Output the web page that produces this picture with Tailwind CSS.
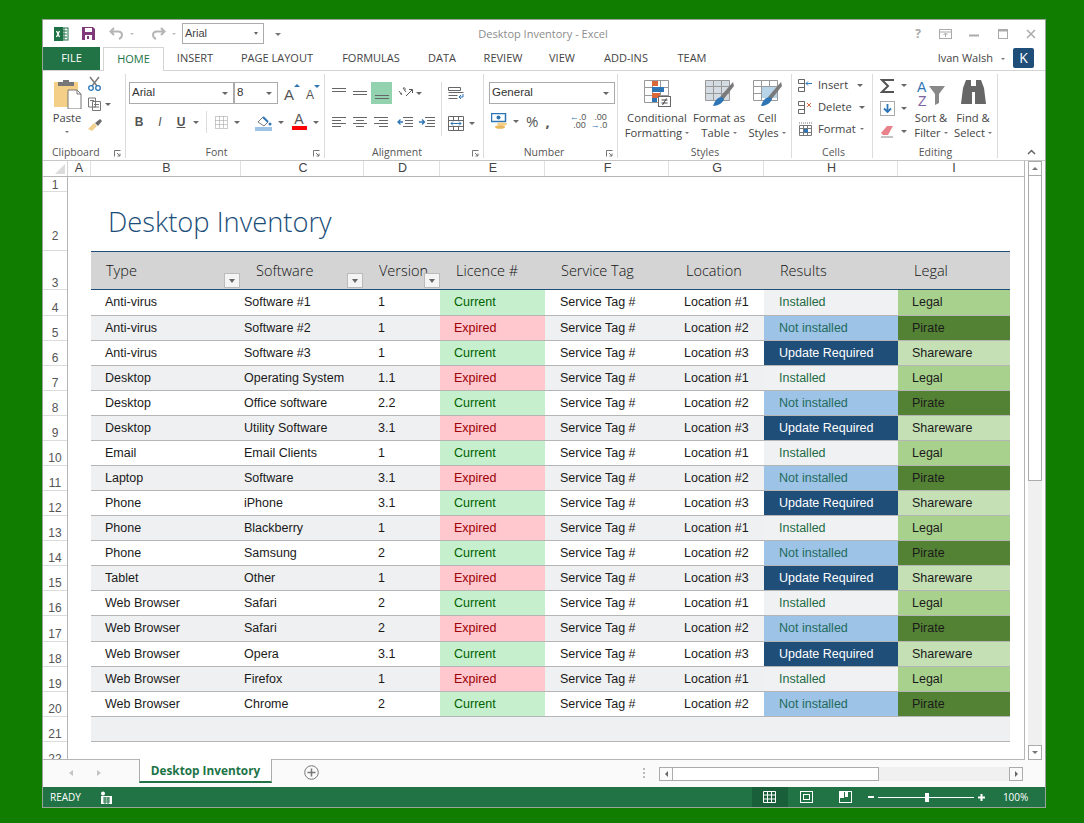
<!DOCTYPE html>
<html lang="en">
<head>
    <meta charset="UTF-8">
    <title>Desktop Inventory - Excel</title>
    <script src="https://cdn.jsdelivr.net/npm/@tailwindcss/browser@4"></script>
</head>
<body class="bg-[#107c00] h-[823px] overflow-hidden font-['Open_Sans',sans-serif]">
    <!-- shared ribbon glyphs -->
    <svg class="hidden">
        <symbol id="al-top" viewBox="0 0 16 12"><path d="M1 1.500h14M1 4.500h14" stroke="#666" fill="none"/></symbol>
        <symbol id="al-mid" viewBox="0 0 16 12"><path d="M1 4.500h14M1 7.500h14" stroke="#666" fill="none"/></symbol>
        <symbol id="al-left" viewBox="0 0 16 12"><path d="M1 .5h14M1 3.500h9M1 6.500h14M1 9.500h9" stroke="#666" fill="none"/></symbol>
        <symbol id="al-center" viewBox="0 0 16 12"><path d="M1 .5h14M4 3.500h8M1 6.500h14M4 9.500h8" stroke="#666" fill="none"/></symbol>
        <symbol id="al-right" viewBox="0 0 16 12"><path d="M1 .5h14M6 3.500h9M1 6.500h14M6 9.500h9" stroke="#666" fill="none"/></symbol>
    </svg>

    <div class="ml-[42px] mt-[19px] absolute w-[1004px] h-[789px] border border-[#9aa59a] bg-white flex flex-col">
        <!-- title bar -->
        <div class="relative h-[25px] pt-[2px] flex items-center shrink-0">
            <svg class="ml-[10px] w-[16px] h-[16px]" viewBox="0 0 16 16"><rect x="6" y="2" width="9" height="12" fill="#fff" stroke="#1e7145"/><path d="M9 5h5M9 8h5M9 11h5M11 2v12" stroke="#1e7145"/><rect x="1" y="1" width="9" height="14" fill="#1e7145"/><path d="M3.500 5l3 6M6.500 5l-3 6" stroke="#fff" stroke-width="1.300"/></svg>
            <svg class="ml-[12px] w-[15px] h-[15px]" viewBox="0 0 15 15"><path d="M1 1h11l2 2v11H1z" fill="#80397b"/><rect x="4" y="2" width="7" height="4" fill="#fff"/><rect x="4" y="9" width="7" height="5" fill="#fff"/><rect x="6" y="10" width="2" height="3" fill="#80397b"/></svg>
            <svg class="ml-[13px] w-[15px] h-[13px]" viewBox="0 0 15 13"><path d="M5 1L1.500 4.500 5 8M2 4.500h7c3 0 4 2 4 3.500s-1 3-3 4" stroke="#b5b5b5" stroke-width="2" fill="none"/></svg>
            <span class="ml-[6px] w-0 h-0 border-x-[2px] border-t-[2px] border-x-transparent border-t-[#bbb]"></span>
            <svg class="ml-[17px] w-[15px] h-[13px]" viewBox="0 0 15 13"><path d="M10 1l3.500 3.500L10 8M13 4.500H6c-3 0-4 2-4 3.500s1 3 3 4" stroke="#b5b5b5" stroke-width="2" fill="none"/></svg>
            <span class="ml-[6px] w-0 h-0 border-x-[2px] border-t-[2px] border-x-transparent border-t-[#bbb]"></span>
            <div class="ml-[6px] w-[82px] h-[21px] border border-[#ababab] flex items-center pl-[2px] text-[11px] text-[#444] font-['Liberation_Sans',sans-serif]">
                Arial
                <span class="ml-auto mr-[5px] w-0 h-0 border-x-[2px] border-t-[3px] border-x-transparent border-t-[#666]"></span>
            </div>
            <span class="ml-[11px] mt-[2px] w-0 h-0 border-x-[3px] border-t-[3px] border-x-transparent border-t-[#777]"></span>
            <!-- centred over the bar -->
            <div class="absolute left-[300px] mt-[1px] w-[400px] text-center text-[11px] text-[#8c8c8c]">Desktop Inventory - Excel</div>
            <div class="ml-auto flex items-center text-[#a8a8a8]">
                <span class="w-[12px] text-[12px] font-bold text-center">?</span>
                <svg class="ml-[15px] w-[13px] h-[10px]" viewBox="0 0 13 10"><rect x=".5" y=".5" width="12" height="9" fill="none" stroke="#aaa"/><path d="M.5 3h12M6.500 8V4.500M4.500 6l2-2 2 2" stroke="#aaa" fill="none"/></svg>
                <svg class="ml-[17px] w-[10px] h-[10px]" viewBox="0 0 10 10"><path d="M0 6.500h10" stroke="#aaa" stroke-width="2"/></svg>
                <svg class="ml-[19px] w-[10px] h-[10px]" viewBox="0 0 10 10"><rect x=".5" y=".5" width="9" height="9" fill="none" stroke="#aaa"/><path d="M0 1.500h10" stroke="#aaa" stroke-width="2"/></svg>
                <svg class="ml-[18px] mr-[9px] w-[10px] h-[10px]" viewBox="0 0 10 10"><path d="M1 1l8 8M9 1l-8 8" stroke="#aaa" stroke-width="1.500"/></svg>
            </div>
        </div>

        <!-- ribbon tabs -->
        <div class="h-[26px] flex items-end border-b border-[#d4d4d4] text-[11px] text-[#444] shrink-0">
            <div class="w-[57px] h-[23px] bg-[#217346] text-white flex items-center justify-center">FILE</div>
            <div class="ml-[3px] w-[61px] h-[24px] -mb-px bg-white border border-b-0 border-[#d4d4d4] text-[#217346] flex items-center justify-center">HOME</div>
            <div class="w-[62px] h-[23px] flex items-center justify-center">INSERT</div>
            <div class="w-[102px] h-[23px] flex items-center justify-center">PAGE LAYOUT</div>
            <div class="w-[86px] h-[23px] flex items-center justify-center">FORMULAS</div>
            <div class="w-[56px] h-[23px] flex items-center justify-center">DATA</div>
            <div class="w-[66px] h-[23px] flex items-center justify-center">REVIEW</div>
            <div class="w-[52px] h-[23px] flex items-center justify-center">VIEW</div>
            <div class="w-[76px] h-[23px] flex items-center justify-center">ADD-INS</div>
            <div class="w-[56px] h-[23px] flex items-center justify-center">TEAM</div>
            <div class="ml-auto h-[23px] flex items-center">
                <span class="text-[11px]">Ivan Walsh</span>
                <span class="ml-[8px] w-0 h-0 border-x-[2px] border-t-[2px] border-x-transparent border-t-[#777]"></span>
                <div class="ml-[8px] mr-[11px] mb-[2px] w-[21px] h-[20px] bg-[#1f4e79] text-white text-[14px] flex items-center justify-center rounded-[2px]">K</div>
            </div>
        </div>

        <!-- ribbon -->
        <div class="relative h-[90px] flex border-b border-[#c8c8c8] text-[11.200px] text-[#444] shrink-0">
            <!-- clipboard -->
            <div class="relative w-[83px] h-[84px] mt-[3px] border-r border-[#dcdcdc] flex">
                <div class="ml-[8px] w-[32px] flex flex-col items-center pt-[5px]">
                    <svg class="w-[29px] h-[30px]" viewBox="0 0 29 30"><rect x="1" y="3" width="24" height="25" fill="#f3cf87"/><path d="M5 3h5V1h6v2h5v4H5z" fill="#777"/><path d="M15 11h9l4 4v15H15z" fill="#fff" stroke="#777"/><path d="M24 11v4h4" fill="none" stroke="#777"/></svg>
                    <span class="mt-[2px] leading-[14px]">Paste</span>
                    <span class="mt-[6px] w-0 h-0 border-x-[2px] border-t-[2px] border-x-transparent border-t-[#777]"></span>
                </div>
                <div class="ml-[4px] flex flex-col pt-[2px]">
                    <svg class="w-[15px] h-[15px]" viewBox="0 0 15 15"><path d="M3 1l7 9M12 1L5 10" stroke="#777" stroke-width="1.400"/><circle cx="4" cy="12" r="2.300" fill="none" stroke="#2e75b6" stroke-width="1.300"/><circle cx="11" cy="12" r="2.300" fill="none" stroke="#2e75b6" stroke-width="1.300"/></svg>
                    <div class="mt-[6px] flex items-center">
                        <svg class="w-[15px] h-[14px]" viewBox="0 0 15 14"><path d="M1.500 1h7v9h-7zM5.500 4.500h8v9h-8z" fill="#fff" stroke="#777"/><path d="M3 3.500h4M7 7.500h5M7 10h5" stroke="#777"/></svg>
                        <span class="ml-[3px] w-0 h-0 border-x-[3px] border-t-[3px] border-x-transparent border-t-[#666]"></span>
                    </div>
                    <svg class="mt-[7px] w-[16px] h-[14px]" viewBox="0 0 16 14"><path d="M1 11l6-6 3 3-5 5z" fill="#f0d08c"/><path d="M8 5l5-4 2 2-4 5z" fill="#6b6b6b"/></svg>
                </div>
                <div class="absolute -bottom-[1px] left-[9px] text-[10.500px] leading-[14px] text-[#555]">Clipboard</div>
                <svg class="absolute bottom-[1px] right-[4px] w-[7px] h-[7px]" viewBox="0 0 7 7"><path d="M.5 6.500v-6h6M3 3l3 3M6 3.500V6H3.500" fill="none" stroke="#777"/></svg>
            </div>

            <!-- font -->
            <div class="relative w-[199px] h-[84px] mt-[3px] border-r border-[#dcdcdc] font-['Liberation_Sans',sans-serif]">
                <div class="ml-[3px] mt-[8px] w-[149px] h-[22px] border border-[#ababab] flex items-center text-[11.500px] text-[#333]">
                    <span class="pl-[2px] w-[105px] h-full flex items-center border-r-2 border-[#ababab]">Arial<span class="ml-auto mr-[5px] w-0 h-0 border-x-[3px] border-t-[3px] border-x-transparent border-t-[#666]"></span></span>
                    <span class="pl-[2px] flex-1 flex items-center">8<span class="ml-auto mr-[5px] w-0 h-0 border-x-[3px] border-t-[3px] border-x-transparent border-t-[#666]"></span></span>
                </div>
                <div class="absolute left-[158px] top-[10px] text-[15px] text-[#555]">A</div>
                <span class="absolute left-[168px] top-[10px] w-0 h-0 border-x-[3px] border-b-[3px] border-x-transparent border-b-[#2e75b6]"></span>
                <div class="absolute left-[180px] top-[12px] text-[12px] text-[#555]">A</div>
                <span class="absolute left-[188px] top-[11px] w-0 h-0 border-x-[3px] border-t-[3px] border-x-transparent border-t-[#2e75b6]"></span>
                <div class="ml-[8px] mt-[9px] flex items-center text-[#555] text-[12px] h-[18px]">
                    <span class="w-[10px] font-bold text-center">B</span>
                    <span class="ml-[11px] w-[10px] italic text-center">I</span>
                    <span class="ml-[11px] w-[10px] font-bold underline text-center">U</span>
                    <span class="ml-[7px] w-0 h-0 border-x-[3px] border-t-[3px] border-x-transparent border-t-[#666]"></span>
                    <span class="ml-[7px] w-px h-[22px] bg-[#dcdcdc]"></span>
                    <svg class="ml-[8px] w-[13px] h-[13px]" viewBox="0 0 13 13"><path d="M.5.500h12v12H.5zM4.500.500v12M8.500.500v12M.5 4.500h12M.5 8.500h12" fill="none" stroke="#999" stroke-dasharray="1 1"/></svg>
                    <span class="ml-[6px] w-0 h-0 border-x-[3px] border-t-[3px] border-x-transparent border-t-[#666]"></span>
                    <svg class="ml-[15px] w-[17px] h-[17px]" viewBox="0 0 17 17"><path d="M3 8l5-5 5 5-4 4z" fill="#fff" stroke="#777"/><path d="M8 3l5 5" stroke="#2e75b6" stroke-width="2"/><circle cx="15" cy="10" r="1.500" fill="#2e75b6"/><rect y="13" width="17" height="4" fill="#9dc3e6"/></svg>
                    <span class="ml-[6px] w-0 h-0 border-x-[3px] border-t-[3px] border-x-transparent border-t-[#666]"></span>
                    <div class="ml-[7px] w-[16px] h-[18px] flex flex-col items-center leading-[13px] text-[14px]">A<span class="w-[15px] h-[4px] bg-[#f00]"></span></div>
                    <span class="ml-[6px] w-0 h-0 border-x-[3px] border-t-[3px] border-x-transparent border-t-[#666]"></span>
                </div>
                <div class="absolute -bottom-[1px] left-0 w-[181px] text-center text-[10.500px] leading-[14px] text-[#555] font-['Open_Sans',sans-serif]">Font</div>
                <svg class="absolute bottom-[1px] right-[4px] w-[7px] h-[7px]" viewBox="0 0 7 7"><path d="M.5 6.500v-6h6M3 3l3 3M6 3.500V6H3.500" fill="none" stroke="#777"/></svg>
            </div>

            <!-- alignment -->
            <div class="relative w-[159px] h-[84px] mt-[3px] border-r border-[#dcdcdc]">
                <div class="flex items-center h-[22px] mt-[8px] pl-[6px]">
                    <svg class="w-[16px] h-[12px]"><use href="#al-top"/></svg>
                    <svg class="ml-[5px] w-[16px] h-[12px]"><use href="#al-mid"/></svg>
                    <div class="ml-[3px] w-[21px] h-[22px] bg-[#92d2ae] flex items-end justify-center pb-[1px]"><svg class="w-[16px] h-[12px]"><use href="#al-mid"/></svg></div>
                    <svg class="ml-[5px] w-[16px] h-[16px] overflow-visible" viewBox="0 0 16 16"><path d="M9 11l6-6M12 4.500h3.500V8" stroke="#555" fill="none"/><path d="M3 9l2-1M2 6l3 4M6 3l3 4M6 3c2-1 3 1 1.500 2.500" stroke="#666" fill="none"/></svg>
                    <span class="ml-[3px] w-0 h-0 border-x-[3px] border-t-[3px] border-x-transparent border-t-[#666]"></span>
                    <span class="ml-[19px] w-px h-[54px] mt-[32px] bg-[#dcdcdc]"></span>
                    <svg class="ml-[6px] w-[16px] h-[15px]" viewBox="0 0 16 15"><path d="M.5 1.500h12v3H.5zM.5 6.500h15M.5 9.500h9M.5 12.500h9" fill="none" stroke="#666"/><path d="M15 8v3h-4M13 9l-2 2 2 2" fill="none" stroke="#2e75b6"/></svg>
                </div>
                <div class="flex items-center h-[22px] mt-[8px] pl-[6px]">
                    <svg class="w-[16px] h-[12px]"><use href="#al-left"/></svg>
                    <svg class="ml-[5px] w-[16px] h-[12px]"><use href="#al-center"/></svg>
                    <svg class="ml-[5px] w-[16px] h-[12px]"><use href="#al-right"/></svg>
                    <svg class="ml-[8px] w-[16px] h-[12px]" viewBox="0 0 16 12"><path d="M6 .5h10M8 3.500h8M8 6.500h8M6 9.500h10" stroke="#666" fill="none"/><path d="M6 5H1M3.500 2.500L1 5l2.500 2.500" stroke="#2e75b6" stroke-width="1.300" fill="none"/></svg>
                    <svg class="ml-[6px] w-[16px] h-[12px]" viewBox="0 0 16 12"><path d="M6 .5h10M8 3.500h8M8 6.500h8M6 9.500h10" stroke="#666" fill="none"/><path d="M0 5h5M3 2.500L5.500 5 3 7.500" stroke="#2e75b6" stroke-width="1.300" fill="none"/></svg>
                    <svg class="ml-[13px] w-[16px] h-[15px]" viewBox="0 0 16 15"><path d="M.5.500h15v14H.5zM.5 4.500h15M.5 10.500h15M5.500.500v4M10.500.500v4M5.500 10.500v4M10.500 10.500v4" fill="none" stroke="#666"/><path d="M3 7.500h10M5 5.500l-2 2 2 2M11 5.500l2 2-2 2" fill="none" stroke="#2e75b6"/></svg>
                    <span class="ml-[5px] w-0 h-0 border-x-[3px] border-t-[3px] border-x-transparent border-t-[#666]"></span>
                </div>
                <div class="absolute -bottom-[1px] left-0 w-[144px] text-center text-[10.500px] leading-[14px] text-[#555]">Alignment</div>
                <svg class="absolute bottom-[1px] right-[4px] w-[7px] h-[7px]" viewBox="0 0 7 7"><path d="M.5 6.500v-6h6M3 3l3 3M6 3.500V6H3.500" fill="none" stroke="#777"/></svg>
            </div>

            <!-- number -->
            <div class="relative w-[134px] h-[84px] mt-[3px] border-r border-[#dcdcdc]">
                <div class="ml-[5px] mt-[8px] w-[126px] h-[22px] border border-[#ababab] flex items-center pl-[2px] text-[11.500px] text-[#333] font-['Liberation_Sans',sans-serif]">General<span class="ml-auto mr-[5px] w-0 h-0 border-x-[3px] border-t-[3px] border-x-transparent border-t-[#666]"></span></div>
                <div class="flex items-center mt-[6px] pl-[7px] h-[22px]">
                    <svg class="w-[17px] h-[16px]" viewBox="0 0 17 16"><rect x=".5" y=".5" width="14" height="8" fill="#fff" stroke="#2e75b6" stroke-width="1.500"/><circle cx="7.500" cy="4.500" r="2" fill="#2e75b6"/><ellipse cx="11" cy="11" rx="5" ry="1.800" fill="#f3cf87"/><ellipse cx="9" cy="14" rx="5" ry="1.800" fill="#e8b85c"/></svg>
                    <span class="ml-[5px] w-0 h-0 border-x-[3px] border-t-[3px] border-x-transparent border-t-[#666]"></span>
                    <span class="ml-[7px] text-[15px] text-[#555] leading-[15px]">%</span>
                    <span class="ml-[7px] text-[15px] font-bold text-[#555] leading-[15px]">,</span>
                    <div class="ml-[20px] w-[16px] text-[9px] leading-[8px] text-[#555] text-right font-['Liberation_Sans',sans-serif]"><span class="text-[#2e75b6]">←</span>.0<br>.00</div>
                    <div class="ml-[5px] w-[16px] text-[9px] leading-[8px] text-[#555] text-right font-['Liberation_Sans',sans-serif]">.00<br><span class="text-[#2e75b6]">→</span>.0</div>
                </div>
                <div class="absolute -bottom-[1px] left-0 w-[120px] text-center text-[10.500px] leading-[14px] text-[#555]">Number</div>
                <svg class="absolute bottom-[1px] right-[4px] w-[7px] h-[7px]" viewBox="0 0 7 7"><path d="M.5 6.500v-6h6M3 3l3 3M6 3.500V6H3.500" fill="none" stroke="#777"/></svg>
            </div>

            <!-- styles -->
            <div class="relative w-[174px] h-[84px] mt-[3px] border-r border-[#dcdcdc] flex whitespace-nowrap">
                <div class="w-[78px] flex flex-col items-center pt-[6px]">
                    <svg class="w-[28px] h-[27px]" viewBox="0 0 28 27"><path d="M1.500.500h24v22h-24zM9.500.500v22M17.500.500v22M1.500 7.500h24M1.500 15.500h24" fill="#fff" stroke="#999"/><rect x="9" y="1" width="6" height="5" fill="#d9693b"/><rect x="9" y="7" width="12" height="5" fill="#2e75b6"/><rect x="9" y="13" width="8" height="5" fill="#d9693b"/><rect x="9" y="18" width="5" height="4" fill="#2e75b6"/><rect x="15.500" y="16.500" width="12" height="10" fill="#fff" stroke="#666"/><path d="M18.500 20h6M18.500 23h6M23.500 18.500l-4 6.500" stroke="#444"/></svg>
                    <span class="mt-[3px] leading-[15px]">Conditional</span>
                    <span class="leading-[15px] flex items-center">Formatting<span class="ml-[3px] w-0 h-0 border-x-[2px] border-t-[2px] border-x-transparent border-t-[#777]"></span></span>
                </div>
                <div class="w-[50px] flex flex-col items-center pt-[6px] -ml-[2px]">
                    <svg class="w-[30px] h-[27px]" viewBox="0 0 30 27"><path d="M1.500.500h24v20h-24zM9.500.500v20M17.500.500v20M1.500 6.500h24M1.500 13.500h24" fill="#d4dbe2" stroke="#999"/><path d="M29 2L16 17l3 3L30 6z" fill="#7a7a7a"/><path d="M18 17c-4 0-7 3-9 9 5 0 10-3 11-7z" fill="#2e75b6"/></svg>
                    <span class="mt-[3px] leading-[15px]">Format as</span>
                    <span class="leading-[15px] flex items-center">Table<span class="ml-[3px] w-0 h-0 border-x-[2px] border-t-[2px] border-x-transparent border-t-[#777]"></span></span>
                </div>
                <div class="w-[46px] flex flex-col items-center pt-[6px]">
                    <svg class="w-[30px] h-[27px]" viewBox="0 0 30 27"><path d="M1.500.500h24v20h-24zM9.500.500v20M17.500.500v20M1.500 6.500h24M1.500 13.500h24" fill="#fff" stroke="#999"/><rect x="10" y="7" width="15" height="11" fill="#b7d4e8"/><path d="M29 2L16 17l3 3L30 6z" fill="#7a7a7a"/><path d="M18 17c-4 0-7 3-9 9 5 0 10-3 11-7z" fill="#2e75b6"/></svg>
                    <span class="mt-[3px] leading-[15px]">Cell</span>
                    <span class="leading-[15px] flex items-center">Styles<span class="ml-[3px] w-0 h-0 border-x-[2px] border-t-[2px] border-x-transparent border-t-[#777]"></span></span>
                </div>
                <div class="absolute -bottom-[1px] left-0 w-[174px] text-center text-[10.500px] leading-[14px] text-[#555]">Styles</div>
            </div>

            <!-- cells -->
            <div class="relative w-[81px] h-[84px] mt-[3px] border-r border-[#dcdcdc] flex flex-col pl-[6px]">
                <div class="flex items-center h-[22px]">
                    <svg class="w-[15px] h-[15px]" viewBox="0 0 15 15"><path d="M.5 1.500h6v4h-6zM.5 9.500h6v4h-6zM6.500 1.500v12" fill="none" stroke="#666"/><path d="M8 5.500h6M10 3.500l-2 2 2 2" fill="none" stroke="#2e75b6"/></svg>
                    <span class="ml-[5px]">Insert</span>
                    <span class="ml-[9px] w-0 h-0 border-x-[3px] border-t-[3px] border-x-transparent border-t-[#666]"></span>
                </div>
                <div class="flex items-center h-[22px]">
                    <svg class="w-[15px] h-[15px]" viewBox="0 0 15 15"><path d="M.5 1.500h6v4h-6zM.5 9.500h6v4h-6zM6.500 1.500v12" fill="none" stroke="#666"/><path d="M9 3l4 4M13 3l-4 4" stroke="#d9693b"/></svg>
                    <span class="ml-[5px]">Delete</span>
                    <span class="ml-[7px] w-0 h-0 border-x-[3px] border-t-[3px] border-x-transparent border-t-[#666]"></span>
                </div>
                <div class="flex items-center h-[22px]">
                    <svg class="w-[15px] h-[15px]" viewBox="0 0 15 15"><path d="M1.500 3.500h12v10h-12zM1.500 6.500h12M1.500 10.500h12M5.500 3.500v10M9.500 3.500v10" fill="none" stroke="#777"/><rect x="6" y="7" width="4" height="3.500" fill="#2e75b6"/><path d="M1 1h13" stroke="#777" stroke-dasharray="1 1"/></svg>
                    <span class="ml-[5px]">Format</span>
                    <span class="ml-[4px] w-0 h-0 border-x-[2px] border-t-[2px] border-x-transparent border-t-[#777]"></span>
                </div>
                <div class="absolute -bottom-[1px] left-0 w-[83px] text-center text-[10.500px] leading-[14px] text-[#555]">Cells</div>
            </div>

            <!-- editing -->
            <div class="relative w-[125px] h-[84px] mt-[3px] border-r border-[#dcdcdc] flex whitespace-nowrap">
                <div class="pl-[7px] pt-[1px] w-[37px] shrink-0 flex flex-col">
                    <div class="flex items-center h-[21px]">
                        <svg class="w-[15px] h-[14px]" viewBox="0 0 15 14"><path d="M14 1H2l6 6-6 6h12" fill="none" stroke="#555" stroke-width="2"/></svg>
                        <span class="ml-[6px] w-0 h-0 border-x-[3px] border-t-[3px] border-x-transparent border-t-[#666]"></span>
                    </div>
                    <div class="flex items-center h-[24px]">
                        <svg class="w-[15px] h-[15px]" viewBox="0 0 15 15"><rect x=".5" y=".5" width="14" height="14" fill="#fff" stroke="#aaa"/><path d="M7.500 3v8M4 7.500l3.500 3.500L11 7.500" fill="none" stroke="#2e75b6" stroke-width="1.800"/></svg>
                        <span class="ml-[6px] w-0 h-0 border-x-[3px] border-t-[3px] border-x-transparent border-t-[#666]"></span>
                    </div>
                    <div class="flex items-center h-[22px]">
                        <svg class="w-[15px] h-[13px]" viewBox="0 0 15 13"><path d="M1 8l6-7h6l-5 9H3z" fill="#e8838b"/><path d="M1 12h12" stroke="#888"/></svg>
                        <span class="ml-[6px] w-0 h-0 border-x-[3px] border-t-[3px] border-x-transparent border-t-[#666]"></span>
                    </div>
                </div>
                <div class="w-[42px] flex flex-col items-center pt-[6px]">
                    <svg class="w-[30px] h-[27px] overflow-visible" viewBox="0 0 30 27"><text x="1" y="12" font-size="14" font-family="Liberation Sans" fill="#2e75b6">A</text><text x="2" y="26" font-size="14" font-family="Liberation Sans" fill="#8064a2">Z</text><path d="M13 6h16l-6 8v9l-4 2V14z" fill="#888"/></svg>
                    <span class="mt-[3px] leading-[15px]">Sort &amp;</span>
                    <span class="leading-[15px] flex items-center">Filter<span class="ml-[3px] w-0 h-0 border-x-[2px] border-t-[2px] border-x-transparent border-t-[#777]"></span></span>
                </div>
                <div class="w-[42px] flex flex-col items-center pt-[5px]">
                    <svg class="w-[27px] h-[27px]" viewBox="0 0 27 27"><path d="M3 9l3-8h5v6h5V1h5l3 8 2 16H15V13h-3v12H1z" fill="#666"/></svg>
                    <span class="mt-[4px] leading-[15px]">Find &amp;</span>
                    <span class="leading-[15px] flex items-center">Select<span class="ml-[3px] w-0 h-0 border-x-[2px] border-t-[2px] border-x-transparent border-t-[#777]"></span></span>
                </div>
                <div class="absolute -bottom-[1px] left-0 w-[125px] text-center text-[10.500px] leading-[14px] text-[#555]">Editing</div>
            </div>
            <svg class="absolute right-[9px] bottom-[5px] w-[9px] h-[6px]" viewBox="0 0 9 6"><path d="M1 5l3.500-3.500L8 5" fill="none" stroke="#666" stroke-width="1.500"/></svg>
        </div>

        <!-- sheet and vertical scrollbar -->
        <div class="flex h-[599px] shrink-0 overflow-hidden">
            <div class="w-[982px] border-r border-[#b5b5b5] border-b overflow-hidden shrink-0">
                <!-- column letters -->
                <div class="flex h-[16px] border-b border-[#b5b5b5] text-[12.500px] text-[#444] font-['Liberation_Sans',sans-serif] leading-[15px]">
                    <div class="w-[25px] border-r border-[#d4d4d4] flex items-end justify-end pr-[2px] pb-[2px]"><span class="w-0 h-0 border-l-[10px] border-b-[10px] border-l-transparent border-b-[#dcdcdc]"></span></div>
                    <div class="w-[23px] text-center border-r border-[#e0e0e0]">A</div>
                    <div class="w-[150px] pl-[2px] text-center border-r border-[#e0e0e0]">B</div>
                    <div class="w-[123px] pl-[2px] text-center border-r border-[#e0e0e0]">C</div>
                    <div class="w-[76px] pl-[2px] text-center border-r border-[#e0e0e0]">D</div>
                    <div class="w-[105px] pl-[2px] text-center border-r border-[#e0e0e0]">E</div>
                    <div class="w-[124px] pl-[2px] text-center border-r border-[#e0e0e0]">F</div>
                    <div class="w-[95px] pl-[2px] text-center border-r border-[#e0e0e0]">G</div>
                    <div class="w-[134px] pl-[2px] text-center border-r border-[#e0e0e0]">H</div>
                    <div class="w-[112px] text-center">I</div>
                </div>
                <div class="flex">
                    <!-- row numbers -->
                    <div id="rowHeads" class="w-[25px] shrink-0 border-r border-[#b5b5b5] text-[12px] text-[#555] font-['Liberation_Sans',sans-serif]"></div>
                    <div class="pl-[23px] w-[942px] shrink-0">
                        <div class="h-[15px]"></div>
                        <div class="h-[59px] pt-[10px] pl-[17px] text-[27.300px] leading-[40px] font-light text-[#1a4d78]">Desktop Inventory</div>
                        <!-- table head -->
                        <div class="grid grid-cols-[150px_123px_76px_105px_124px_95px_134px_112px] w-[919px] h-[39px] bg-[#d4d4d4] border-y border-[#1f4e79] text-[14.500px] font-light text-[#111]">
                            <div class="relative pl-[15px] pt-[8px]">Type<span class="absolute right-[1px] bottom-[1px] w-[16px] h-[15px] bg-[#f4f4f4] border border-[#bbb] flex items-center justify-center"><span class="w-0 h-0 border-x-[3px] border-t-[4px] border-x-transparent border-t-[#666]"></span></span></div>
                            <div class="relative pl-[15px] pt-[8px]">Software<span class="absolute right-[1px] bottom-[1px] w-[16px] h-[15px] bg-[#f4f4f4] border border-[#bbb] flex items-center justify-center"><span class="w-0 h-0 border-x-[3px] border-t-[4px] border-x-transparent border-t-[#666]"></span></span></div>
                            <div class="relative pl-[15px] pt-[8px]">Version<span class="absolute right-0 bottom-[1px] w-[16px] h-[15px] bg-[#f4f4f4] border border-[#bbb] flex items-center justify-center"><span class="w-0 h-0 border-x-[3px] border-t-[4px] border-x-transparent border-t-[#666]"></span></span></div>
                            <div class="pl-[16px] pt-[8px]">Licence #</div>
                            <div class="pl-[16px] pt-[8px]">Service Tag</div>
                            <div class="pl-[17px] pt-[8px]">Location</div>
                            <div class="pl-[16px] pt-[8px]">Results</div>
                            <div class="pl-[16px] pt-[8px]">Legal</div>
                        </div>
                        <div id="rows" class="w-[919px] text-[12.500px] text-[#1a1a1a] font-['Liberation_Sans',sans-serif]"></div>
                        <div class="w-[919px] h-[25px] bg-[#eff0f2] border-b border-[#b5b5b5]"></div>
                    </div>
                </div>
            </div>
            <!-- vertical scrollbar -->
            <div class="ml-[3px] w-[14px] flex flex-col">
                <div class="h-[15px] border border-[#ababab] flex items-center justify-center shrink-0"><span class="w-0 h-0 border-x-[3px] border-b-[3px] border-x-transparent border-b-[#777]"></span></div>
                <div class="h-[305px] border-x border-b border-[#ababab] shrink-0"></div>
                <div class="flex-1 bg-[#f0f0f0]"></div>
                <div class="h-[15px] border border-[#ababab] flex items-center justify-center shrink-0 bg-white"><span class="w-0 h-0 border-x-[3px] border-t-[3px] border-x-transparent border-t-[#777]"></span></div>
            </div>
        </div>

        <!-- sheet tabs -->
        <div class="flex h-[27px] shrink-0 bg-[#fafafa] items-start">
            <span class="ml-[26px] mt-[10px] w-0 h-0 border-y-[3px] border-r-[4px] border-y-transparent border-r-[#c4c4c4]"></span>
            <span class="ml-[24px] mt-[10px] w-0 h-0 border-y-[3px] border-l-[4px] border-y-transparent border-l-[#c4c4c4]"></span>
            <div class="ml-[38px] -mt-px w-[133px] h-[24px] pt-[2px] bg-white border-x border-[#ababab] border-b-2 border-b-[#217346] text-[11.800px] font-bold text-[#217346] flex items-center justify-center">Desktop Inventory</div>
            <svg class="ml-[32px] mt-[5px] w-[15px] h-[15px]" viewBox="0 0 15 15"><circle cx="7.500" cy="7.500" r="6.800" fill="none" stroke="#777"/><path d="M7.500 3.500v8M3.500 7.500h8" stroke="#777" stroke-width="1.500"/></svg>
            <span class="ml-[324px] mt-[8px] w-[2px] h-[10px] border-l-2 border-dotted border-[#bbb]"></span>
            <div class="ml-[14px] mt-[7px] flex h-[14px] w-[364px]">
                <div class="w-[14px] border border-[#ababab] flex items-center justify-center"><span class="w-0 h-0 border-y-[3px] border-r-[3px] border-y-transparent border-r-[#666]"></span></div>
                <div class="w-[206px] border border-l-0 border-[#ababab] bg-white"></div>
                <div class="flex-1 bg-[#f0f0f0]"></div>
                <div class="w-[14px] border border-[#ababab] flex items-center justify-center"><span class="w-0 h-0 border-y-[3px] border-l-[3px] border-y-transparent border-l-[#666]"></span></div>
            </div>
        </div>

        <!-- status bar -->
        <div class="flex-1 bg-[#217346] flex items-center text-[10px] text-white">
            <span class="ml-[7px]">READY</span>
            <svg class="ml-[19px] w-[13px] h-[13px]" viewBox="0 0 13 13"><circle cx="3" cy="2.500" r="2" fill="#fff"/><path d="M1 5h11v8H1z" fill="#fff"/><path d="M3 7h7M3 9h7M3 11h7M5 6v7M8 6v7" stroke="#217346"/></svg>
            <div class="ml-[639px] w-[36px] h-[20px] bg-[#19603a] flex items-center justify-center">
                <svg class="w-[13px] h-[12px]" viewBox="0 0 13 12"><path d="M.5.500h12v11H.5zM4.500.500v11M8.500.500v11M.5 4h12M.5 8h12" fill="none" stroke="#fff"/></svg>
            </div>
            <svg class="ml-[12px] w-[13px] h-[12px]" viewBox="0 0 13 12"><rect x=".5" y=".5" width="12" height="11" fill="none" stroke="#fff"/><rect x="3.500" y="3.500" width="6" height="5" fill="none" stroke="#fff"/></svg>
            <svg class="ml-[26px] w-[13px] h-[12px]" viewBox="0 0 13 12"><rect x=".5" y=".5" width="12" height="11" fill="none" stroke="#fff"/><rect x="1" y="1" width="4" height="6" fill="#fff"/><rect x="6" y="1" width="3" height="5" fill="#fff"/></svg>
            <span class="ml-[16px] w-[6px] h-[2px] bg-white"></span>
            <div class="ml-[4px] relative w-[96px] h-px bg-white">
                <span class="absolute left-[47px] -top-[4px] w-[4px] h-[9px] bg-white"></span>
            </div>
            <svg class="ml-[4px] w-[7px] h-[7px]" viewBox="0 0 7 7"><path d="M3.500 0v7M0 3.500h7" stroke="#fff" stroke-width="2"/></svg>
            <span class="ml-[18px] text-[10px]">100%</span>
        </div>
    </div>

    <script>
        // One entry per spreadsheet row: type, software, version
        const items = [
            ['Anti-virus', 'Software #1', '1'],
            ['Anti-virus', 'Software #2', '1'],
            ['Anti-virus', 'Software #3', '1'],
            ['Desktop', 'Operating System', '1.1'],
            ['Desktop', 'Office software', '2.2'],
            ['Desktop', 'Utility Software', '3.1'],
            ['Email', 'Email Clients', '1'],
            ['Laptop', 'Software', '3.1'],
            ['Phone', 'iPhone', '3.1'],
            ['Phone', 'Blackberry', '1'],
            ['Phone', 'Samsung', '2'],
            ['Tablet', 'Other', '1'],
            ['Web Browser', 'Safari', '2'],
            ['Web Browser', 'Safari', '2'],
            ['Web Browser', 'Opera', '3.1'],
            ['Web Browser', 'Firefox', '1'],
            ['Web Browser', 'Chrome', '2'],
        ];

        const licence = [
            ['Current', 'bg-[#c6efce] text-[#006100]'],
            ['Expired', 'bg-[#ffc7ce] text-[#9c0006]'],
        ];
        const results = [
            ['Installed', 'bg-[#f0f1f3] text-[#1d6b45]'],
            ['Not installed', 'bg-[#9dc3e6] text-[#1f6b5e]'],
            ['Update Required', 'bg-[#1f4e79] text-white'],
        ];
        const legal = [
            ['Legal', 'bg-[#a9d18e]'],
            ['Pirate', 'bg-[#548235]'],
            ['Shareware', 'bg-[#c5e0b4]'],
        ];

        // Data rows (sheet rows 4 and 17 are a pixel taller)
        const rows = document.getElementById('rows');
        items.forEach((item, i) => {
            const lic = licence[i % 2];
            const res = results[i % 3];
            const leg = legal[i % 3];
            const row = document.createElement('div');
            row.className = 'grid grid-cols-[150px_123px_76px_105px_124px_95px_134px_112px] items-stretch border-b border-[#b5b5b5] '
                + (i % 2 ? 'bg-[#eff0f2] ' : 'bg-white ')
                + (i === 0 || i === 13 ? 'h-[26px]' : 'h-[25px]');
            row.innerHTML = `
                <div class="pl-[14px] flex items-center">${item[0]}</div>
                <div class="pl-[3px] flex items-center">${item[1]}</div>
                <div class="pl-[14px] flex items-center">${item[2]}</div>
                <div class="pl-[14px] flex items-center ${lic[1]}">${lic[0]}</div>
                <div class="pl-[15px] flex items-center">Service Tag #</div>
                <div class="pl-[15px] flex items-center">Location #${i % 3 + 1}</div>
                <div class="pl-[15px] flex items-center ${res[1]}">${res[0]}</div>
                <div class="pl-[14px] flex items-center ${leg[1]}">${leg[0]}</div>
            `;
            rows.appendChild(row);
        });

        // Row numbers, bottom aligned like Excel
        const heads = document.getElementById('rowHeads');
        const heights = {
            1: 'h-[15px] leading-[12px]',
            2: 'h-[59px] pb-[7px] leading-[14px]',
            3: 'h-[39px] leading-[12px]',
            4: 'h-[26px] leading-[14px]',
            17: 'h-[26px] leading-[14px]',
        };
        for (let n = 1; n <= 22; n++) {
            const cell = document.createElement('div');
            cell.className = 'flex items-end justify-center border-b border-[#dcdcdc] ' + (heights[n] || 'h-[25px] leading-[14px]');
            cell.textContent = n;
            heads.appendChild(cell);
        }
    </script>
</body>
</html>
